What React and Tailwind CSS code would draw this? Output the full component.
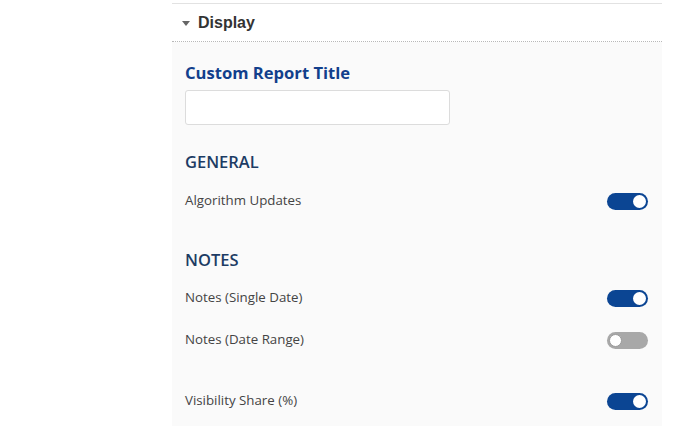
import React from 'react';

const Toggle = ({ on }) => (
  <div
    className={`w-[41px] h-[17px] rounded-full flex items-center px-[2px] ${
      on ? 'bg-[#0b4593] justify-end' : 'bg-[#a8a8a8] justify-start'
    }`}
  >
    <div
      className={`w-[13px] h-[13px] rounded-full bg-white ${on ? '' : 'border border-[#9a9a9a]'}`}
    />
  </div>
);

const ToggleRow = ({ label, on, className = '' }) => (
  <div className={`flex items-center justify-between h-[24px] pr-[14px] ${className}`}>
    <span className="text-[13.3px] text-[#444]">{label}</span>
    <Toggle on={on} />
  </div>
);

const SectionHeading = ({ children, className = '' }) => (
  <h3 className={`text-[16.5px] leading-[22px] font-semibold text-[#1d3c64] ${className}`}>{children}</h3>
);

export default function App() {
  return (
    <div className="w-[674px] h-[426px] bg-white overflow-hidden" style={{ fontFamily: '"Open Sans", sans-serif' }}>
      <div className="ml-[172px] w-[490px] mt-[3px] border-t border-[#e2e2e2]">
        <div className="h-[38px] flex items-center pl-[10px] border-b border-dotted border-[#b8b8b8]">
          <svg width="8" height="5" viewBox="0 0 8 5" className="mr-[8px] mt-[1px]">
            <path d="M0 0 L8 0 L4 5 Z" fill="#666" />
          </svg>
          <span className="text-[16px] font-bold text-[#333]" style={{ fontFamily: '"Liberation Sans", Arial, sans-serif' }}>
            Display
          </span>
        </div>
        <div className="bg-[#fafafa] pl-[13px] pt-[20px] h-[400px]">
          <label className="block text-[16.6px] leading-[22px] font-bold text-[#123f8c]">Custom Report Title</label>
          <input className="mt-[6px] block w-[265px] h-[35px] bg-white border border-[#dcdcdc] rounded-[3px]" />
          <SectionHeading className="mt-[26px]">GENERAL</SectionHeading>
          <ToggleRow label="Algorithm Updates" on className="mt-[16px]" />
          <SectionHeading className="mt-[36px]">NOTES</SectionHeading>
          <ToggleRow label="Notes (Single Date)" on className="mt-[15px]" />
          <ToggleRow label="Notes (Date Range)" on={false} className="mt-[18px]" />
          <ToggleRow label="Visibility Share (%)" on className="mt-[37px]" />
        </div>
      </div>
    </div>
  );
}
